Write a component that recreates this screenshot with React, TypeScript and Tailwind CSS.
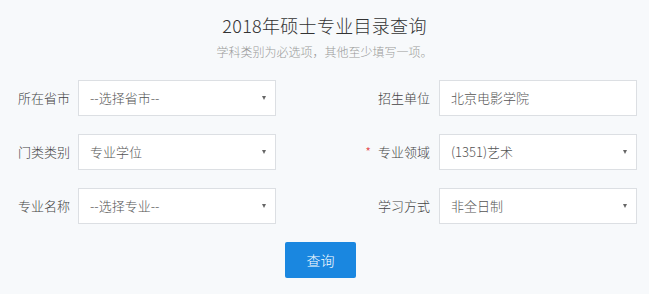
import React from "react";

type Field = { label: string; value: string; select?: boolean; required?: boolean };

const rows: [Field, Field][] = [
  [
    { label: "所在省市", value: "--选择省市--", select: true },
    { label: "招生单位", value: "北京电影学院" },
  ],
  [
    { label: "门类类别", value: "专业学位", select: true },
    { label: "专业领域", value: "(1351)艺术", select: true, required: true },
  ],
  [
    { label: "专业名称", value: "--选择专业--", select: true },
    { label: "学习方式", value: "非全日制", select: true },
  ],
];

function Box({ field }: { field: Field }) {
  return (
    <div className="relative flex h-[36px] w-[198px] items-center border border-[#dcdfe3] bg-white pl-[11px] text-[13px] text-[#555]">
      <span>{field.value}</span>
      {field.select && (
        <span className="absolute right-[9px] top-1/2 -translate-y-1/2 border-x-[2.5px] border-t-[4px] border-x-transparent border-t-[#666]" />
      )}
    </div>
  );
}

export default function App() {
  return (
    <div className="h-[294px] w-[649px] bg-[#f7f9fb] font-light font-['Noto_Sans_CJK_SC','Noto_Sans',sans-serif]">
      <h1 className="pt-[14px] text-center text-[18px] leading-[22px] tracking-[0.3px] text-[#333]">2018年硕士专业目录查询</h1>
      <p className="mt-[8px] text-center text-[12px] leading-[16px] text-[#999]">
        学科类别为必选项，其他至少填写一项。
      </p>

      <div className="mt-[20px] flex flex-col gap-[18px]">
        {rows.map(([left, right]) => (
          <div key={left.label} className="flex items-center justify-between pl-[18px] pr-[12px]">
            <div className="flex items-center gap-[8px]">
              <span className="text-[13px] text-[#444]">{left.label}</span>
              <Box field={left} />
            </div>
            <div className="flex items-center gap-[9px]">
              <span className="text-[13px] text-[#444]">
                {right.required && <span className="mr-[7px] text-[#e4393c]">*</span>}
                {right.label}
              </span>
              <Box field={right} />
            </div>
          </div>
        ))}
      </div>

      <div className="mt-[18px] flex justify-center pr-[8px]">
        <button className="h-[36px] w-[71px] rounded-[2px] bg-[#1a87e0] text-[14px] text-white">查询</button>
      </div>
    </div>
  );
}
